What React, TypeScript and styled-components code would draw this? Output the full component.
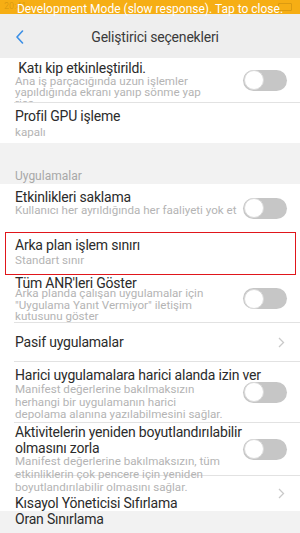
import React from "react";
import styled, { createGlobalStyle } from "styled-components";

const GlobalStyle = createGlobalStyle`
  html, body {
    margin: 0;
    padding: 0;
    background: #ffffff;
  }
  body {
    font-family: Roboto, "Noto Sans", "Liberation Sans", sans-serif;
    -webkit-font-smoothing: antialiased;
  }
`;

type SettingItem = {
  title: string[];
  summary?: string[];
  height: number;
  padTop: number;
  gap?: number;
  lh?: number;
  control?: "toggle" | "chevron";
  clip?: boolean;
  divider?: boolean;
  selected?: boolean;
  indent?: boolean;
};

const topItems: SettingItem[] = [
  {
    title: ["Katı kip etkinleştirildi."],
    summary: [
      "Ana iş parçacığında uzun işlemler",
      "yapıldığında ekranı yanıp sönme yap",
      "rica",
    ],
    height: 45,
    padTop: 2,
    gap: 0,
    lh: 11,
    control: "toggle",
    clip: true,
    divider: true,
    indent: true,
  },
  {
    title: ["Profil GPU işleme"],
    summary: ["kapalı"],
    height: 40,
    padTop: 5,
    gap: 3,
  },
];

const appItems: SettingItem[] = [
  {
    title: ["Etkinlikleri saklama"],
    summary: ["Kullanıcı her ayrıldığında her faaliyeti yok et"],
    height: 48,
    padTop: 5,
    gap: 0,
    control: "toggle",
  },
  {
    title: ["Arka plan işlem sınırı"],
    summary: ["Standart sınır"],
    height: 43,
    padTop: 5,
    gap: 2,
    selected: true,
  },
  {
    title: ["Tüm ANR'leri Göster"],
    summary: [
      "Arka planda çalışan uygulamalar için",
      "\"Uygulama Yanıt Vermiyor\" iletişim",
      "kutusunu göster",
    ],
    height: 48,
    padTop: 0,
    gap: -3,
    lh: 11.7,
    control: "toggle",
    divider: true,
  },
  {
    title: ["Pasif uygulamalar"],
    height: 39,
    padTop: 11,
    control: "chevron",
    divider: true,
  },
  {
    title: ["Harici uygulamalara harici alanda izin ver"],
    summary: [
      "Manifest değerlerine bakılmaksızın",
      "herhangi bir uygulamanın harici",
      "depolama alanına yazılabilmesini sağlar.",
    ],
    height: 61,
    padTop: 5,
    gap: 0,
    lh: 12.5,
    control: "toggle",
    divider: true,
  },
  {
    title: ["Aktivitelerin yeniden boyutlandırılabilir", "olmasını zorla"],
    summary: [
      "Manifest değerlerine bakılmaksızın, tüm",
      "etkinliklerin çok pencere için yeniden",
      "boyutlandırılabilir olmasını sağlar.",
    ],
    height: 53,
    padTop: 1,
    gap: -1,
    lh: 12.8,
    control: "toggle",
    divider: true,
  },
  {
    title: ["Kısayol Yöneticisi Sıfırlama"],
    height: 35,
    padTop: 19,
    control: "chevron",
  },
];

export default function App() {
  return (
    <Screen>
      <GlobalStyle />
      <Banner>
        <StatusGhost>20:41</StatusGhost>
        <BatteryGhost />
        <BannerText>Development Mode (slow response). Tap to close.</BannerText>
      </Banner>
      <Header>
        <BackButton aria-label="Geri">
          <svg width="10" height="14" viewBox="0 0 10 14">
            <path
              d="M7.5 1 L2 7 L7.5 13"
              fill="none"
              stroke="#3b8fe6"
              strokeWidth="1.6"
              strokeLinecap="round"
              strokeLinejoin="round"
            />
          </svg>
        </BackButton>
        <HeaderTitle>Geliştirici seçenekleri</HeaderTitle>
      </Header>

      <List>
        {topItems.map((item) => (
          <Row key={item.title[0]} item={item} />
        ))}
      </List>

      <SectionGap>
        <SectionLabel>Uygulamalar</SectionLabel>
      </SectionGap>

      <List>
        {appItems.map((item) => (
          <Row key={item.title[0]} item={item} />
        ))}
      </List>

      <Footer>
        <FooterTitle>Oran Sınırlama</FooterTitle>
      </Footer>
    </Screen>
  );
}

function Row({ item }: { item: SettingItem }) {
  return (
    <RowBox
      $height={item.height}
      $clip={!!item.clip}
      $divider={!!item.divider}
      $selected={!!item.selected}
    >
      <TextCol $padTop={item.padTop}>
        <Title>
          {item.title.map((line, i) => (
            <Line key={i}>
              {item.indent && i === 0 ? "\u00a0" : ""}
              {line}
            </Line>
          ))}
        </Title>
        {item.summary && (
          <Summary $gap={item.gap ?? 0} $lh={item.lh ?? 11.5}>
            {item.summary.map((line, i) => (
              <Line key={i}>{line}</Line>
            ))}
          </Summary>
        )}
      </TextCol>
      {item.control === "toggle" && (
        <Toggle>
          <Knob />
        </Toggle>
      )}
      {item.control === "chevron" && (
        <Chevron>
          <svg width="7" height="11" viewBox="0 0 7 11">
            <path
              d="M1 1 L5.5 5.5 L1 10"
              fill="none"
              stroke="#c9c9c9"
              strokeWidth="1.3"
            />
          </svg>
        </Chevron>
      )}
    </RowBox>
  );
}

const Screen = styled.div`
  width: 300px;
  height: 533px;
  overflow: hidden;
  background: #ffffff;
`;

const Banner = styled.div`
  position: relative;
  height: 14px;
  background: #f6ae14;
  z-index: 2;
`;

const StatusGhost = styled.span`
  position: absolute;
  left: 4px;
  top: 1px;
  font-size: 9px;
  color: rgba(120, 80, 0, 0.22);
`;

const BatteryGhost = styled.span`
  position: absolute;
  right: 8px;
  top: 3px;
  width: 12px;
  height: 6px;
  border: 1px solid rgba(120, 80, 0, 0.2);
  border-radius: 1px;
`;

const BannerText = styled.div`
  position: relative;
  text-align: center;
  color: #ffffff;
  font-size: 12px;
  line-height: 14px;
  padding-top: 2px;
  white-space: nowrap;
`;

const Header = styled.div`
  display: flex;
  align-items: center;
  height: 44px;
  background: #eeeeee;
`;

const BackButton = styled.div`
  display: flex;
  align-items: center;
  justify-content: center;
  width: 40px;
  height: 100%;
  padding-top: 2px;
`;

const HeaderTitle = styled.div`
  flex: 1;
  text-align: center;
  padding-right: 30px;
  padding-top: 2px;
  font-size: 14px;
  letter-spacing: -0.2px;
  color: #3a3a3a;
`;

const List = styled.div`
  background: #ffffff;
`;

const RowBox = styled.div<{
  $height: number;
  $clip: boolean;
  $divider: boolean;
  $selected: boolean;
}>`
  position: relative;
  display: flex;
  align-items: center;
  height: ${({ $height }) => $height}px;
  margin-left: ${({ $selected }) => ($selected ? 5 : 14)}px;
  margin-right: ${({ $selected }) => ($selected ? 4 : 0)}px;
  padding-left: ${({ $selected }) => ($selected ? 10 : 1)}px;
  padding-right: ${({ $selected }) => ($selected ? 9 : 13)}px;
  box-sizing: border-box;
  overflow: ${({ $clip }) => ($clip ? "hidden" : "visible")};
  border-bottom: ${({ $divider }) => ($divider ? "1px solid #e2e2e2" : "none")};
  outline: ${({ $selected }) => ($selected ? "1px solid #e0161b" : "none")};
  outline-offset: -1px;
`;

const TextCol = styled.div<{ $padTop: number }>`
  flex: 1;
  align-self: stretch;
  min-width: 0;
  padding-top: ${({ $padTop }) => $padTop}px;
`;

const Line = styled.div`
  white-space: nowrap;
`;

const Title = styled.div`
  font-size: 14px;
  line-height: 16px;
  letter-spacing: -0.2px;
  color: #2b2b2b;
`;

const Summary = styled.div<{ $gap: number; $lh: number }>`
  margin-top: ${({ $gap }) => $gap}px;
  font-size: 11.6px;
  line-height: ${({ $lh }) => $lh}px;
  color: #b4b4b4;
`;

const Toggle = styled.div`
  flex: none;
  width: 44px;
  height: 21px;
  border-radius: 11px;
  background: #c6c6c6;
  display: flex;
  align-items: center;
`;

const Knob = styled.div`
  width: 20px;
  height: 20px;
  border-radius: 50%;
  background: #ffffff;
  box-sizing: border-box;
  border: 1px solid #dadada;
  margin-left: 0.5px;
`;

const Chevron = styled.div`
  flex: none;
  width: 8px;
  display: flex;
  justify-content: flex-end;
  margin-right: 2px;
`;

const SectionGap = styled.div`
  height: 41px;
  background: #f2f2f2;
  display: flex;
  align-items: flex-end;
  padding-left: 15px;
  padding-bottom: 1px;
  box-sizing: border-box;
`;

const SectionLabel = styled.div`
  font-size: 12px;
  color: #a8a8a8;
`;

const Footer = styled.div`
  height: 30px;
  background: #f2f2f2;
  padding-left: 15px;
`;

const FooterTitle = styled.div`
  font-size: 14px;
  line-height: 16px;
  letter-spacing: -0.2px;
  color: #2b2b2b;
`;
